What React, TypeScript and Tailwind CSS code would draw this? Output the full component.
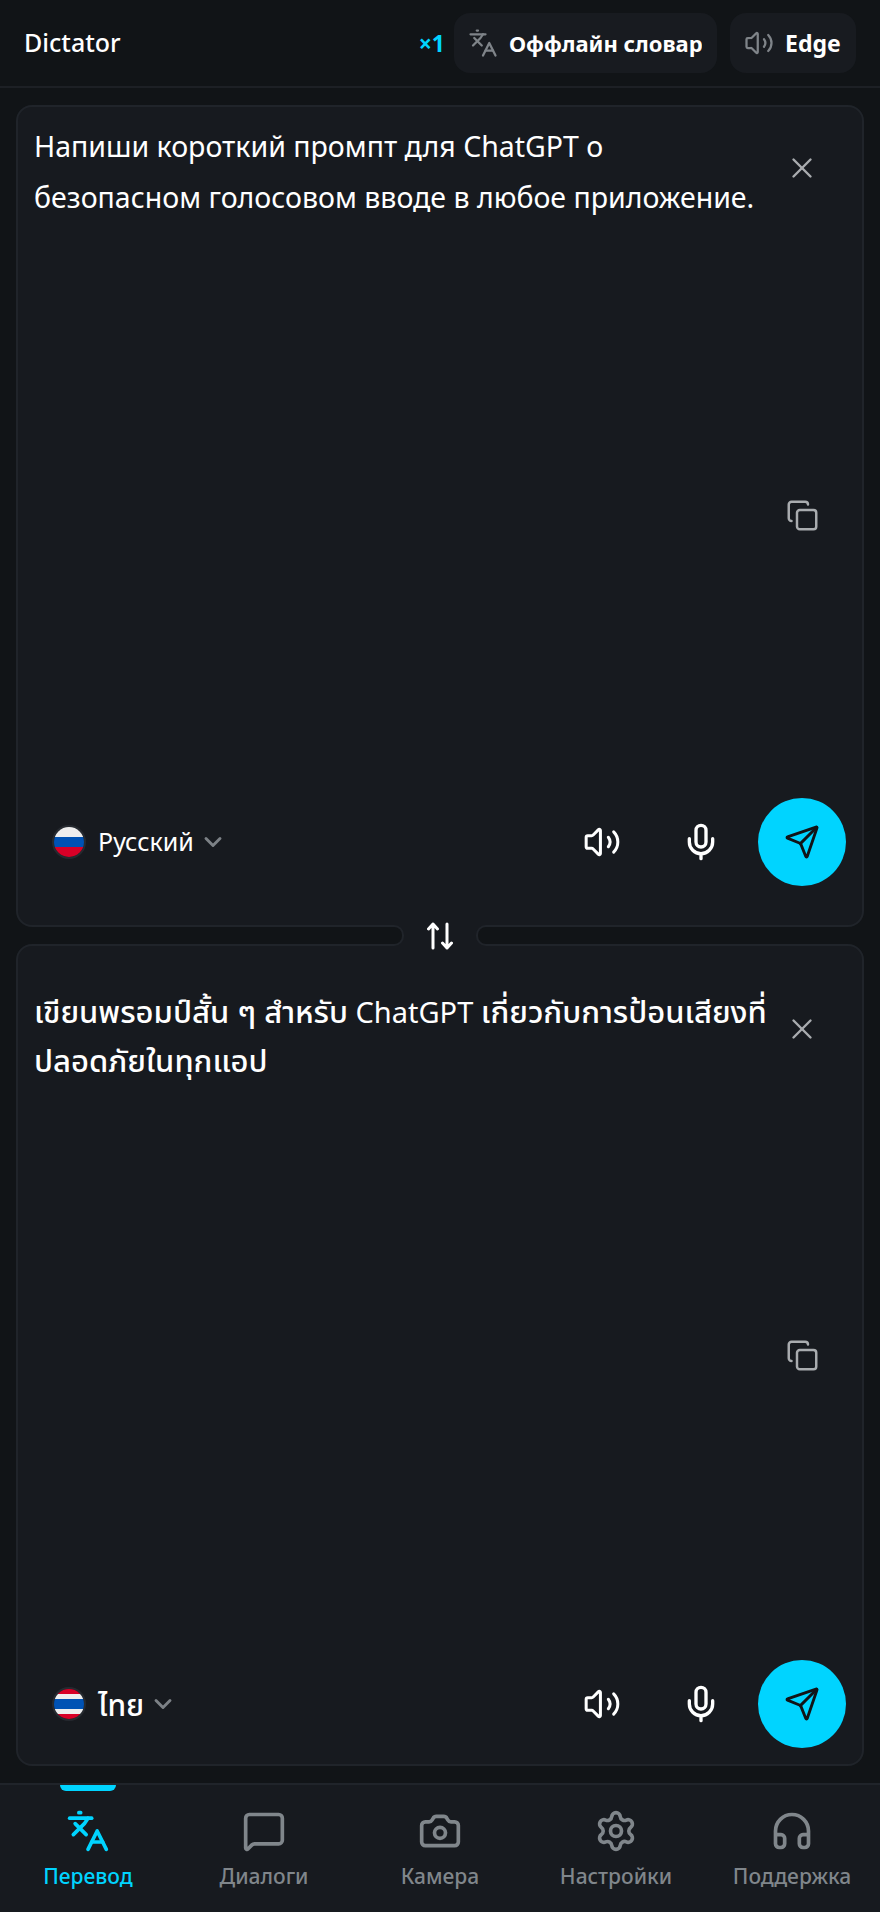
import React from "react";
import { ChevronDown, Copy, Headphones, Languages, MessageSquare, Camera, Mic, Send, Settings, Volume2, X } from "lucide-react";

const font = "font-['Noto_Sans','Noto_Sans_Thai','Open_Sans',sans-serif]";

function FlagRu() {
  return (
    <div className="w-[34px] h-[34px] rounded-full border-2 border-[#262a30] overflow-hidden flex flex-col shrink-0">
      <div className="flex-1 bg-[#eeeeee]" />
      <div className="flex-1 bg-[#0052b4]" />
      <div className="flex-1 bg-[#d80027]" />
    </div>
  );
}

function FlagTh() {
  return (
    <div className="w-[34px] h-[34px] rounded-full border-2 border-[#262a30] overflow-hidden flex flex-col shrink-0">
      <div className="h-[5px] bg-[#d80027]" />
      <div className="h-[5px] bg-[#eeeeee]" />
      <div className="flex-1 bg-[#0052b4]" />
      <div className="h-[5px] bg-[#eeeeee]" />
      <div className="h-[5px] bg-[#d80027]" />
    </div>
  );
}

function SwapIcon() {
  return (
    <svg width="26" height="28" viewBox="0 0 26 28" fill="none" stroke="white" strokeWidth="3" strokeLinecap="round" strokeLinejoin="round">
      <path d="M6 26V2M1.5 7 6 2l4.5 5" />
      <path d="M20 2v24M15.5 21l4.5 5 4.5-5" />
    </svg>
  );
}

function Panel({
  children,
  flag,
  lang,
  langClass,
  textClass,
  iconTop,
  iconGap,
  rowBottom,
}: {
  children: React.ReactNode;
  flag: React.ReactNode;
  lang: string;
  langClass: string;
  textClass: string;
  iconTop: string;
  iconGap: string;
  rowBottom: string;
}) {
  return (
    <div className="mx-4 h-[822px] rounded-[16px] border-2 border-[#20242a] bg-[#171a1f] flex flex-col shrink-0">
      <div className="flex-1 flex">
        <div className={`flex-1 min-w-0 pl-4 text-white whitespace-pre ${textClass}`}>{children}</div>
        <div className={`w-[80px] mr-[20px] shrink-0 flex flex-col items-center ${iconTop}`}>
          <X size={34} strokeWidth={1.7} className="text-[#a9acaf]" />
          <Copy size={33} strokeWidth={1.8} className={`text-[#a9acaf] ${iconGap}`} />
        </div>
      </div>
      <div className={`h-[88px] pl-[34px] pr-[16px] flex items-center ${rowBottom}`}>
        {flag}
        <span className={`ml-[12px] text-white ${langClass}`}>{lang}</span>
        <ChevronDown size={28} strokeWidth={2.5} className="ml-[5px] text-[#7c8186]" />
        <div className="ml-auto flex items-center">
          <Volume2 size={38} strokeWidth={1.9} className="text-white mr-[60px]" />
          <Mic size={40} strokeWidth={2} className="text-white mr-[37px]" />
          <div className="w-[88px] h-[88px] rounded-full bg-[#00d4ff] flex items-center justify-center">
            <Send size={36} strokeWidth={1.9} className="text-[#111417]" />
          </div>
        </div>
      </div>
    </div>
  );
}

const tabs = [
  { label: "Диалоги", Icon: MessageSquare },
  { label: "Камера", Icon: Camera },
  { label: "Настройки", Icon: Settings },
  { label: "Поддержка", Icon: Headphones },
];

export default function App() {
  return (
    <div className={`${font} w-[880px] h-[1912px] bg-[#111417] flex flex-col overflow-hidden`}>
      <header className="h-[88px] border-b-2 border-[#1d2025] flex items-center pl-6 pr-6 shrink-0">
        <span className="text-white text-[25px] font-medium">Dictator</span>
        <span className="ml-auto text-[#00d4ff] text-[23px] font-bold mr-[9px]">×1</span>
        <div className="w-[263px] h-[60px] rounded-[16px] bg-[#181b20] flex items-center pl-[14px] pr-[15px] mr-[13px]">
          <Languages size={30} strokeWidth={1.8} className="text-[#7f8489] shrink-0" />
          <span className="ml-[11px] text-white text-[22px] font-bold whitespace-nowrap overflow-hidden">Оффлайн словарь</span>
        </div>
        <div className="w-[126px] h-[60px] rounded-[16px] bg-[#181b20] flex items-center pl-[14px]">
          <Volume2 size={30} strokeWidth={1.8} className="text-[#7f8489] shrink-0" />
          <span className="ml-[11px] text-white text-[23px] font-bold">Edge</span>
        </div>
      </header>
      <div className="h-[17px] shrink-0" />
      <Panel
        textClass="pt-[14px] text-[28.5px] leading-[51px]"
        iconTop="pt-[44px]"
        iconGap="mt-[314px]"
        rowBottom="mb-[39px]"
        flag={<FlagRu />}
        lang="Русский"
        langClass="text-[25px]"
      >
        {"Напиши короткий промпт для ChatGPT о\nбезопасном голосовом вводе в любое приложение."}
      </Panel>
      <div className="mx-4 h-[17px] flex shrink-0 relative">
        <div className="absolute left-[378px] -top-[2px] w-[92px] h-[21px] bg-[#171a1f]" />
        <div className="relative flex-1 ml-4 -my-[2px] rounded-r-[10px] border-y-2 border-r-2 border-[#20242a] bg-[#111417]" />
        <div className="relative w-[72px] flex justify-center items-center">
          <SwapIcon />
        </div>
        <div className="relative flex-1 mr-4 -my-[2px] rounded-l-[10px] border-y-2 border-l-2 border-[#20242a] bg-[#111417]" />
      </div>
      <Panel
        textClass="pt-[41px] text-[29px] leading-[48px]"
        iconTop="pt-[66px]"
        iconGap="mt-[293px]"
        rowBottom="mb-[16px]"
        flag={<FlagTh />}
        lang="ไทย"
        langClass="text-[30px] font-medium"
      >
        <span className="font-medium text-[31px]">เขียนพรอมป์สั้น ๆ สำหรับ</span> ChatGPT <span className="font-medium text-[31px]">{"เกี่ยวกับการป้อนเสียงที่\nปลอดภัยในทุกแอป"}</span>
      </Panel>
      <div className="h-[17px] shrink-0" />
      <nav className="flex-1 bg-[#171a1f] border-t-2 border-[#20242a] flex relative">
        <div className="absolute left-[60px] top-0 w-[56px] h-[6px] rounded-b-[6px] bg-[#00d4ff]" />
        <div className="flex-1 flex flex-col items-center pt-[24px]">
          <Languages size={44} strokeWidth={2} className="text-[#00d4ff]" />
          <span className="mt-[8px] text-[21px] font-medium text-[#00d4ff]">Перевод</span>
        </div>
        {tabs.map(({ label, Icon }) => (
          <div key={label} className="flex-1 flex flex-col items-center pt-[24px]">
            <Icon size={44} strokeWidth={2} className="text-[#80868b]" />
            <span className="mt-[8px] text-[21px] font-medium text-[#80868b] whitespace-nowrap">{label}</span>
          </div>
        ))}
      </nav>
    </div>
  );
}
